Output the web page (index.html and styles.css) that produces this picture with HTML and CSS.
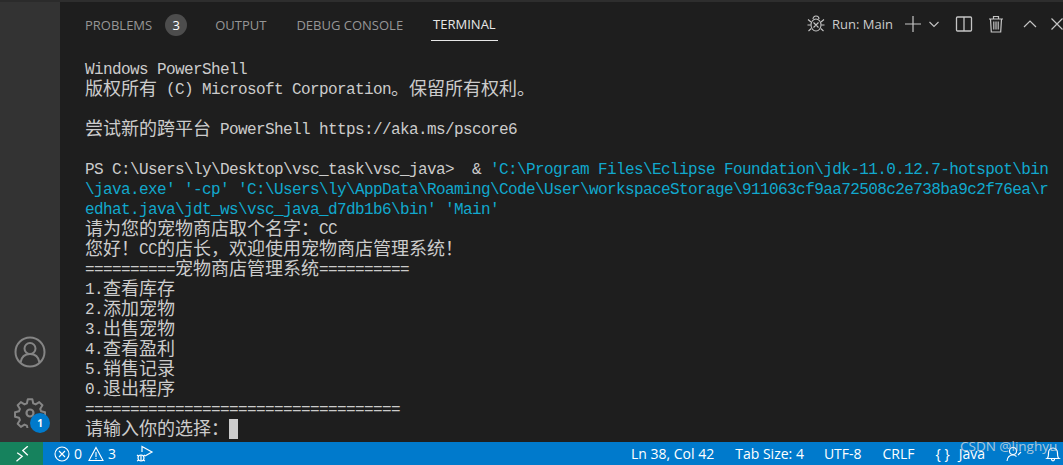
FILE: index.html
```html
<!DOCTYPE html>
<html lang="zh">
<head>
<meta charset="utf-8">
<title>Terminal</title>
<link rel="stylesheet" href="styles.css">
</head>
<body>
<div class="window">
  <div class="main">
    <aside class="activity">
      <svg class="account" viewBox="0 0 32 32" width="32" height="32" fill="none" stroke="#858585" stroke-width="2"><circle cx="16" cy="16" r="14.5"/><circle cx="16" cy="12.5" r="5.5"/><path d="M6.5 26.500c1-6 4.500-8.500 9.500-8.500s8.500 2.500 9.500 8.500"/></svg>
      <div class="gear-wrap">
        <svg viewBox="0 0 32 32" width="32" height="32" fill="none" stroke="#858585" stroke-width="2.200" stroke-linejoin="round"><path d="M13.500 2h5l1 4.500 2.600 1.100 4-2.500 3.500 3.500-2.500 4 1.100 2.600 4.300 1v5l-4.300 1-1.100 2.600 2.500 4-3.500 3.500-4-2.500-2.600 1.100-1 4.300h-5l-1-4.300-2.600-1.100-4 2.500-3.500-3.500 2.500-4-1.100-2.600-4.300-1v-5l4.300-1 1.100-2.600-2.500-4 3.500-3.500 4 2.500 2.600-1.100z" transform="translate(1.500 1.500) scale(.91)"/><circle cx="16" cy="17" r="3.500"/></svg>
        <span class="gear-badge">1</span>
      </div>
    </aside>
    <section class="panel">
      <header class="tabs">
        <nav class="tab-list">
          <span class="tab">PROBLEMS</span><span class="count">3</span>
          <span class="tab tab-output">OUTPUT</span>
          <span class="tab tab-debug">DEBUG CONSOLE</span>
          <span class="tab tab-active">TERMINAL</span>
        </nav>
        <div class="actions">
          <svg class="i-bug" viewBox="0 0 20 20" width="20" height="20" fill="none" stroke="#c5c5c5" stroke-width="1.100"><path d="M7 5c0-1.800 1.300-3 3-3s3 1.200 3 3"/><ellipse cx="10" cy="11" rx="5" ry="6"/><path d="M7.500 8.500l5 5M12.500 8.500l-5 5M5 8L2 5.500M15 8l3-2.500M4.800 11H1.500M15.200 11h3.300M5.300 14.500L2.500 17M14.700 14.500l2.800 2.500"/></svg>
          <span class="run">Run: Main</span>
          <svg class="i-plus" viewBox="0 0 18 18" width="18" height="18" stroke="#c5c5c5" stroke-width="1.200" fill="none"><path d="M9 1v16M1 9h16"/></svg>
          <svg class="i-chev" viewBox="0 0 12 12" width="12" height="12" stroke="#c5c5c5" stroke-width="1.100" fill="none"><path d="M1.500 4l4.500 4.500L10.500 4"/></svg>
          <svg class="i-split" viewBox="0 0 18 18" width="18" height="18" stroke="#c5c5c5" stroke-width="1.300" fill="none"><rect x="1.500" y="2" width="15" height="14" rx="1"/><path d="M9 2v14"/></svg>
          <svg class="i-trash" viewBox="0 0 16 18" width="16" height="18" stroke="#c5c5c5" stroke-width="1.200" fill="none"><path d="M1 4h14M5.500 4V1.500h5V4M2.500 4l.8 13h9.400l.8-13M5.800 6.500v8M8 6.500v8M10.200 6.500v8"/></svg>
          <svg class="i-up" viewBox="0 0 14 14" width="14" height="14" stroke="#c5c5c5" stroke-width="1.200" fill="none"><path d="M1 10l6-6 6 6"/></svg>
          <svg class="i-x" viewBox="0 0 14 14" width="14" height="14" stroke="#c5c5c5" stroke-width="1.200" fill="none"><path d="M1.500 1.500l11 11M12.500 1.500l-11 11"/></svg>
        </div>
      </header>
      <div class="terminal">
        <div class="line">Windows PowerShell</div>
        <div class="line"><span class="zh">版权所有</span> (C) Microsoft Corporation<span class="zh">。保留所有权利。</span></div>
        <div class="line"></div>
        <div class="line"><span class="zh">尝试新的跨平台</span> PowerShell https://aka.ms/pscore6</div>
        <div class="line"></div>
        <div class="line">PS C:\Users\ly\Desktop\vsc_task\vsc_java&gt;  &amp; <span class="str">'C:\Program Files\Eclipse Foundation\jdk-11.0.12.7-hotspot\bin</span></div>
        <div class="line str">\java.exe' '-cp' 'C:\Users\ly\AppData\Roaming\Code\User\workspaceStorage\911063cf9aa72508c2e738ba9c2f76ea\r</div>
        <div class="line str">edhat.java\jdt_ws\vsc_java_d7db1b6\bin' 'Main'</div>
        <div class="line"><span class="zh">请为您的宠物商店取个名字：</span>CC</div>
        <div class="line"><span class="zh">您好！</span>CC<span class="zh">的店长，欢迎使用宠物商店管理系统！</span></div>
        <div class="line">==========<span class="zh">宠物商店管理系统</span>==========</div>
        <div class="line">1.<span class="zh">查看库存</span></div>
        <div class="line">2.<span class="zh">添加宠物</span></div>
        <div class="line">3.<span class="zh">出售宠物</span></div>
        <div class="line">4.<span class="zh">查看盈利</span></div>
        <div class="line">5.<span class="zh">销售记录</span></div>
        <div class="line">0.<span class="zh">退出程序</span></div>
        <div class="line">===================================</div>
        <div class="line"><span class="zh">请输入你的选择：</span><span class="cursor"></span></div>
      </div>
    </section>
  </div>
  <footer class="status">
    <div class="remote"><svg viewBox="0 0 16 16" width="16" height="16" fill="none" stroke="#fff" stroke-width="1.300"><path d="M3.200 6.800l5 3.400-5.700 5M13.800.2L8.800 4.500l5 4.700"/></svg></div>
    <div class="status-left">
      <svg viewBox="0 0 16 16" width="16" height="16" fill="none" stroke="#fff" stroke-width="1.100"><circle cx="8" cy="8" r="7"/><path d="M5 5l6 6M11 5l-6 6"/></svg>
      <span class="num">0</span>
      <svg class="warn" viewBox="0 0 16 16" width="16" height="16" fill="none" stroke="#fff" stroke-width="1.100"><path d="M8 1.500L15 14.500H1z"/><path d="M8 6v5M8 12v1.200"/></svg>
      <span class="num">3</span>
      <svg class="launch" viewBox="0 0 18 18" width="18" height="18" fill="none" stroke="#fff" stroke-width="1.200"><path d="M6 7V1.500L16 7l-7 4"/><circle cx="5" cy="13" r="3"/><path d="M1 10l2 1.500M9 10l-2 1.500M1 16l2-1M9 16l-2-1M5 10v6"/></svg>
    </div>
    <div class="status-right">
      <span class="s-ln">Ln 38, Col 42</span>
      <span class="s-tab">Tab Size: 4</span>
      <span class="s-enc">UTF-8</span>
      <span class="s-eol">CRLF</span>
      <span class="s-br">{ }</span>
      <span class="s-lang">Java</span>
      <svg class="s-user" viewBox="0 0 16 16" width="16" height="16" fill="none" stroke="#fff" stroke-width="1.100"><circle cx="7" cy="5" r="3.500"/><path d="M1 15c.5-4 3-6 6-6 1.500 0 2.500.5 3.500 1.500M12 9l3-3"/></svg>
      <svg class="s-bell" viewBox="0 0 16 16" width="16" height="16" fill="none" stroke="#fff" stroke-width="1.200"><path d="M2 12.500c1.500-1 1.500-3 1.500-5.500C3.500 4 5.500 2 8 2s4.500 2 4.500 5c0 2.500 0 4.500 1.500 5.500zM6.500 13c0 1 .7 1.800 1.500 1.800s1.500-.8 1.500-1.800"/></svg>
    </div>
  </footer>
  <div class="watermark">CSDN @linghyu</div>
</div>
</body>
</html>
```

FILE: styles.css
```css
* { box-sizing: border-box; }
html, body { margin: 0; padding: 0; background: #1e1e1e; }
.window {
  position: relative;
  width: 1063px;
  height: 465px;
  display: flex;
  flex-direction: column;
  overflow: hidden;
}
.main { flex: 1; display: flex; min-height: 0; }
.activity {
  width: 60px;
  background: #333333;
  border-top: 2px solid #2b2b2b;
  display: flex;
  flex-direction: column;
  align-items: center;
  justify-content: flex-end;
  padding: 0 0 14px;
  gap: 28px;
}
.gear-wrap { position: relative; width: 32px; height: 32px; }
.gear-wrap svg, .account { display: block; }
.gear-badge {
  position: absolute;
  left: 16px;
  top: 17px;
  width: 20px;
  height: 20px;
  border-radius: 50%;
  background: #007acc;
  color: #fff;
  font: 700 10px/20px "Open Sans", sans-serif;
  text-align: center;
}
.panel {
  flex: 1;
  min-width: 0;
  background: #1e1e1e;
  border-top: 2px solid #2e2e2e;
  display: flex;
  flex-direction: column;
}
.tabs {
  height: 39px;
  display: flex;
  justify-content: space-between;
  align-items: flex-start;
  padding-left: 25px;
  font-family: "Open Sans", "Liberation Sans", sans-serif;
  font-size: 13px;
}
.tab-list { display: flex; align-items: center; height: 39px; color: #969696; padding-top: 6px; }
.tab { line-height: 20px; }
.count {
  width: 22px;
  height: 22px;
  margin-left: 13px;
  border-radius: 50%;
  background: #4d4d4d;
  color: #fff;
  text-align: center;
  line-height: 22px;
}
.tab-output { margin-left: 28px; }
.tab-debug { margin-left: 30px; }
.tab-active {
  color: #e7e7e7;
  height: 33px;
  line-height: 32px;
  padding: 0 2px;
  margin-left: 28px;
  border-bottom: 1px solid #e7e7e7;
  align-self: flex-start;
  margin-top: 0;
}
.actions { display: flex; align-items: center; height: 44px; color: #cccccc; }
.actions svg { display: block; flex: none; }
.run { margin-left: 6px; font-size: 13px; }
.i-plus { margin-left: 11px; }
.i-chev { margin-left: 6px; }
.i-split { margin-left: 15px; }
.i-trash { margin-left: 15px; }
.i-up { margin-left: 19px; }
.i-x { margin-left: 13px; margin-right: -1px; }
.terminal {
  padding: 18px 0 0 25px;
  font-family: "Liberation Mono", "Noto Sans CJK SC", monospace;
  font-size: 16px;
  letter-spacing: -0.6px;
  color: #cccccc;
}
.line { height: 20px; line-height: 23px; white-space: pre; }
.zh { font-family: "Noto Sans CJK SC", sans-serif; font-size: 18px; line-height: 0; letter-spacing: 0; vertical-align: -1px; }
.str { color: #11a8cd; }
.cursor {
  display: inline-block;
  width: 9px;
  height: 20px;
  background: #cccccc;
  vertical-align: top;
}
.status {
  height: 23px;
  background: #007acc;
  color: #fff;
  display: flex;
  align-items: center;
  font-family: "Open Sans", "Liberation Sans", sans-serif;
  font-size: 14px;
}
.status svg { display: block; flex: none; }
.remote {
  width: 43px;
  height: 23px;
  background: #16825d;
  display: flex;
  align-items: center;
  justify-content: center;
}
.status-left { display: flex; align-items: center; padding-left: 11px; }
.num { margin-left: 4px; }
.warn { margin-left: 6px; }
.launch { margin-left: 20px; }
.status-right { margin-left: auto; display: flex; align-items: center; padding-right: 2px; }
.s-tab { margin-left: 21px; }
.s-enc { margin-left: 20px; }
.s-eol { margin-left: 21px; }
.s-br { margin-left: 21px; }
.s-lang { margin-left: 9px; }
.s-user { margin-left: 21px; }
.s-bell { margin-left: 23px; }
.watermark {
  position: absolute;
  left: 960px;
  top: 437px;
  color: rgba(225, 225, 225, .75);
  font: 13.500px/18px "Open Sans", "Liberation Sans", sans-serif;
}
```
